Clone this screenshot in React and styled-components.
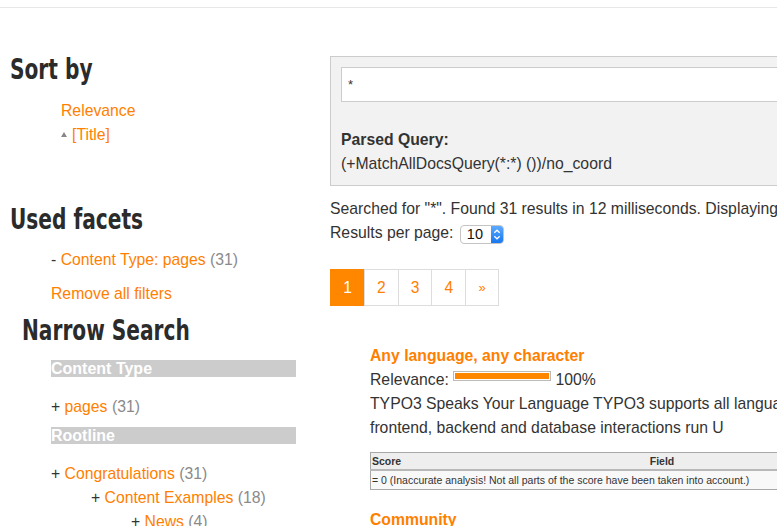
import React from "react"
import styled, { createGlobalStyle } from "styled-components"

const orange = "#ff8000"

const GlobalStyle = createGlobalStyle`
  html, body {
    margin: 0;
    padding: 0;
    overflow: hidden;
    background: #fff;
  }
  body {
    font-family: "Liberation Sans", Arial, sans-serif;
    font-size: 15.75px;
    line-height: 24px;
    color: #333;
  }
  ul {
    list-style: none;
    margin: 0;
    padding: 0;
  }
`

const TopBar = styled.div`
  height: 7px;
  border-bottom: 1px solid #e8e8e8;
`

const Page = styled.div`
  display: flex;
  align-items: flex-start;
  width: 1150px;
  padding-top: 48px;
`

const Sidebar = styled.aside`
  flex: 0 0 320px;
  padding-left: 10px;
`

// the original uses a narrow display face; condense DejaVu to match its width
const Heading = styled.h2`
  margin: ${(p) => p.$top || 0}px 0 0 ${(p) => p.$indent || 0}px;
  font-family: "DejaVu Sans Condensed", "DejaVu Sans", sans-serif;
  font-weight: bold;
  font-size: 28px;
  line-height: 28px;
  color: #2b2b2b;
  white-space: nowrap;
  transform: scaleX(0.8);
  transform-origin: left center;
`

const Link = styled.a`
  color: ${orange};
  text-decoration: none;
  font-weight: ${(p) => (p.$bold ? "bold" : "normal")};
`

const Count = styled.span`
  color: #8a8a8a;
`

const SortList = styled.ul`
  margin-top: 14.6px !important;
  padding-left: 51px !important;
`

const SortArrow = styled.span`
  display: inline-block;
  width: 0;
  height: 0;
  border-left: 3.5px solid transparent;
  border-right: 3.5px solid transparent;
  border-bottom: 5px solid #888;
  margin: 0 5px 3px 0;
`

const UsedList = styled.ul`
  margin-top: 14.8px !important;
  padding-left: 41px !important;
`

const RemoveAll = styled.div`
  margin-top: 10px;
  padding-left: 41px;
`

const FacetGroup = styled.div`
  margin-top: ${(p) => p.$top}px;
  padding-left: 41px;
`

const FacetTitle = styled.div`
  width: 245px;
  height: 17px;
  background: #cccccc;
  color: #fff;
  font-weight: bold;
  font-size: 16px;
  line-height: 17px;
  white-space: nowrap;
`

const FacetOptions = styled.ul`
  margin-top: 18px !important;
  ul {
    padding-left: 40px;
  }
`

const Main = styled.main`
  flex: 0 0 760px;
`

const QueryBox = styled.div`
  border: 1px solid #cccccc;
  background: #f2f2f2;
  padding: 10px 10px 8.7px;
`

const QueryInput = styled.div`
  box-sizing: border-box;
  height: 35px;
  background: #fff;
  border: 1px solid #cccccc;
  padding-left: 6px;
  font-size: 13px;
  line-height: 33px;
`

const ParsedLabel = styled.div`
  margin-top: 25.9px;
  font-weight: bold;
`

const Info = styled.div`
  margin-top: ${(p) => p.$top || 0}px;
  white-space: nowrap;
`

const SelectBox = styled.span`
  display: inline-flex;
  vertical-align: middle;
  box-sizing: border-box;
  height: 19px;
  margin-left: 2px;
  border: 1px solid #c4c4c4;
  border-radius: 4px;
  background: #fff;
  overflow: hidden;
  font-size: 14.5px;
  line-height: 17px;
  color: #111;
`

const SelectValue = styled.span`
  width: 24px;
  padding-left: 6px;
`

const Stepper = styled.span`
  display: flex;
  width: 12px;
  background: linear-gradient(#5aaaff, #1877ee);
`

const Pagination = styled.ul`
  display: flex;
  margin-top: 23.4px !important;
`

const PageItem = styled.li`
  box-sizing: border-box;
  height: 37.7px;
  min-width: ${(p) => (p.$active ? 35 : 34)}px;
  margin-left: -1px;
  padding: 0 12px;
  border: 1px solid ${(p) => (p.$active ? "#ff8700" : "#dddddd")};
  background: ${(p) => (p.$active ? "#ff8700" : "#fff")};
  color: ${(p) => (p.$active ? "#fff" : orange)};
  font-size: ${(p) => (p.$small ? 13 : 15.6)}px;
  line-height: 35.7px;
  text-align: center;
  &:first-child {
    margin-left: 0;
  }
`

const Results = styled.ol`
  list-style: none;
  margin: 37.6px 0 0;
  padding-left: 40px;
`

const Result = styled.li`
  margin-bottom: 17.6px;
  white-space: nowrap;
`

const RelevanceBar = styled.span`
  display: inline-block;
  box-sizing: border-box;
  width: 98px;
  height: 10px;
  margin-bottom: 4px;
  padding: 1px;
  border: 1px solid #bbbbbb;
  background: #fff;
`

const RelevanceFill = styled.span`
  display: block;
  height: 100%;
  background: #ff8700;
`

const ScoreTable = styled.table`
  margin-top: 12.4px;
  width: 412px;
  border-collapse: collapse;
  table-layout: fixed;
  font-size: 10.5px;
  line-height: 14px;
  border: 1px solid #a8a8a8;
  th {
    height: 16px;
    padding: 0 0 0 1px;
    background: #eeeeee;
    border-bottom: 2px solid #b8b8b8;
    font-weight: bold;
    color: #333;
  }
  td {
    height: 18px;
    padding: 0 0 0 1px;
    background: #f8f8f8;
    border-bottom: 1px solid #a8a8a8;
  }
`

const ScoreHead = styled.th`
  width: 170px;
  text-align: left;
`

const FieldHead = styled.th`
  text-align: center;
`

function Chevrons() {
  return (
    <svg width="12" height="17" viewBox="0 0 12 17">
      <path d="M3.3 6.8 L6 4.2 L8.7 6.8" fill="none" stroke="#fff" strokeWidth="1.3" />
      <path d="M3.3 10.2 L6 12.8 L8.7 10.2" fill="none" stroke="#fff" strokeWidth="1.3" />
    </svg>
  )
}

function Facet({ title, top, children }) {
  return (
    <FacetGroup $top={top}>
      <FacetTitle>{title}</FacetTitle>
      <FacetOptions>{children}</FacetOptions>
    </FacetGroup>
  )
}

function SearchSidebar() {
  return (
    <Sidebar>
      <Heading>Sort by</Heading>
      <SortList>
        <li>
          <Link>Relevance</Link>
        </li>
        <li>
          <SortArrow />
          <Link>[Title]</Link>
        </li>
      </SortList>

      <Heading $top={59}>Used facets</Heading>
      <UsedList>
        <li>
          - <Link>Content Type: pages</Link> <Count>(31)</Count>
        </li>
      </UsedList>
      <RemoveAll>
        <Link>Remove all filters</Link>
      </RemoveAll>

      <Heading $top={10.7} $indent={12}>
        Narrow Search
      </Heading>
      <Facet title="Content Type" top={14.7}>
        <li>
          + <Link>pages</Link> <Count>(31)</Count>
        </li>
      </Facet>
      <Facet title="Rootline" top={8.7}>
        <li>
          + <Link>Congratulations</Link> <Count>(31)</Count>
          <ul>
            <li>
              + <Link>Content Examples</Link> <Count>(18)</Count>
              <ul>
                <li>
                  + <Link>News</Link> <Count>(4)</Count>
                </li>
              </ul>
            </li>
          </ul>
        </li>
      </Facet>
    </Sidebar>
  )
}

export default function App() {
  const pages = ["1", "2", "3", "4"]
  return (
    <>
      <GlobalStyle />
      <TopBar />
      <Page>
        <SearchSidebar />
        <Main>
          <QueryBox>
            <QueryInput>*</QueryInput>
            <ParsedLabel>Parsed Query:</ParsedLabel>
            <div>(+MatchAllDocsQuery(*:*) ())/no_coord</div>
          </QueryBox>

          <Info $top={11.6}>
            Searched for "*". Found 31 results in 12 milliseconds. Displaying results 1 to 10.
          </Info>
          <Info>
            Results per page:{" "}
            <SelectBox>
              <SelectValue>10</SelectValue>
              <Stepper>
                <Chevrons />
              </Stepper>
            </SelectBox>
          </Info>

          <Pagination>
            {pages.map((p) => (
              <PageItem key={p} $active={p === "1"}>
                {p}
              </PageItem>
            ))}
            <PageItem $small>»</PageItem>
          </Pagination>

          <Results>
            <Result>
              <Link $bold>Any language, any character</Link>
              <div>
                Relevance:{" "}
                <RelevanceBar>
                  <RelevanceFill style={{ width: "100%" }} />
                </RelevanceBar>{" "}
                100%
              </div>
              <div>
                TYPO3 Speaks Your Language TYPO3 supports all languages of the world. In TYPO3, all
                <br />
                frontend, backend and database interactions run U
              </div>
              <ScoreTable>
                <thead>
                  <tr>
                    <ScoreHead>Score</ScoreHead>
                    <FieldHead>Field</FieldHead>
                  </tr>
                </thead>
                <tbody>
                  <tr>
                    <td colSpan={2}>
                      = 0 (Inaccurate analysis! Not all parts of the score have been taken into account.)
                    </td>
                  </tr>
                </tbody>
              </ScoreTable>
            </Result>
            <Result>
              <Link $bold>Community</Link>
            </Result>
          </Results>
        </Main>
      </Page>
    </>
  )
}
